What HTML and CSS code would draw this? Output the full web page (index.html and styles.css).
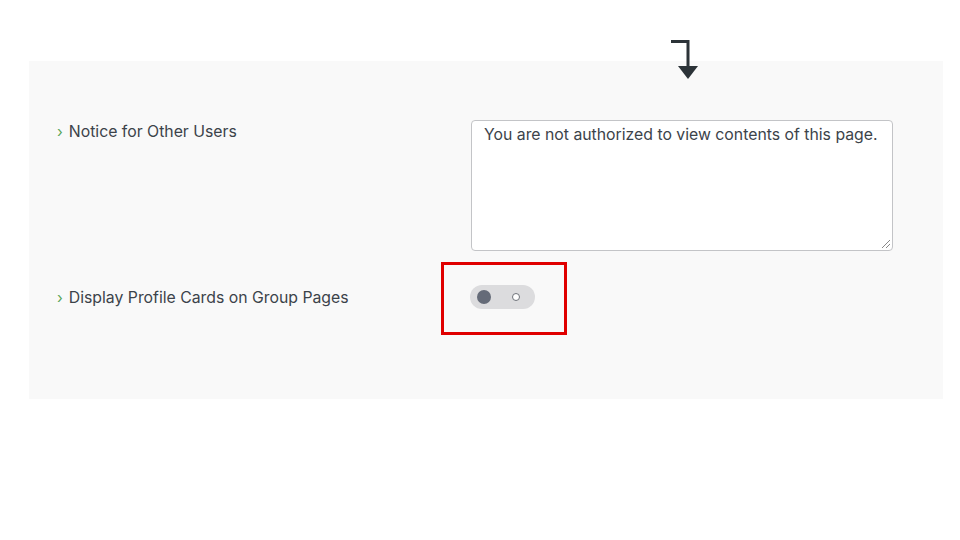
FILE: index.html
```html
<!DOCTYPE html>
<html>
<head>
<meta charset="utf-8">
<link rel="stylesheet" href="styles.css">
</head>
<body>
<div class="top">
  <svg class="turn-arrow" width="30" height="42" viewBox="0 0 30 42">
    <path d="M1 2.5 H18 V29" fill="none" stroke="#2c3338" stroke-width="3"/>
    <path d="M8 27 H28 L18 40 Z" fill="#2c3338"/>
  </svg>
</div>
<div class="panel">
  <div class="row">
    <div class="label"><span class="chev">›</span>Notice for Other Users</div>
    <div class="field">
      <div class="textarea">You are not authorized to view contents of this page.<span class="grip"></span></div>
    </div>
  </div>
  <div class="row row-toggle">
    <div class="label"><span class="chev">›</span>Display Profile Cards on Group Pages</div>
    <div class="field">
      <div class="toggle"><span class="knob"></span><span class="ring"></span></div>
    </div>
    <div class="highlight"></div>
  </div>
</div>
</body>
</html>
```
FILE: styles.css
```css
html, body {
  margin: 0;
  padding: 0;
  background: #fff;
  font-family: Inter, "Noto Sans", "Liberation Sans", sans-serif;
}
.top {
  height: 61px;
  padding-left: 670px;
  box-sizing: border-box;
  padding-top: 39px;
}
.turn-arrow {
  display: block;
}
.panel {
  margin-left: 29px;
  width: 914px;
  height: 338px;
  background: #f9f9f9;
  box-sizing: border-box;
  padding: 59px 50px 0 28px;
}
.row {
  display: flex;
  align-items: flex-start;
}
.label {
  width: 415px;
  padding-top: 1px;
  font-size: 15.8px;
  line-height: 22px;
  color: #3c434a;
  display: flex;
  align-items: center;
}
.chev {
  color: #5aa65a;
  font-size: 15px;
  margin-right: 6px;
  font-weight: 400;
}
.field {
  flex: 1;
}
.textarea {
  position: relative;
  width: 422px;
  height: 131px;
  box-sizing: border-box;
  background: #fff;
  border: 1px solid #c3c4c7;
  border-radius: 4px;
  padding: 3px 12px;
  font-size: 15.8px;
  line-height: 22px;
  color: #3c434a;
}
.grip {
  position: absolute;
  right: 2px;
  bottom: 2px;
  width: 8px;
  height: 8px;
  background: linear-gradient(135deg, transparent 45%, #888 45%, #888 52%, transparent 52%, transparent 70%, #888 70%, #888 78%, transparent 78%);
}
.row-toggle {
  position: relative;
  margin-top: 34px;
  align-items: center;
}
.toggle {
  position: relative;
  margin-left: -2px;
  width: 65px;
  height: 24px;
  border-radius: 12px;
  background: #dcdcde;
}
.knob {
  position: absolute;
  left: 7px;
  top: 5px;
  width: 14px;
  height: 14px;
  border-radius: 50%;
  background: #656b78;
}
.ring {
  position: absolute;
  left: 42px;
  top: 7.5px;
  width: 6px;
  height: 6px;
  border-radius: 50%;
  border: 1.5px solid #6f737a;
  background: #fff;
}
.highlight {
  position: absolute;
  left: 384px;
  top: -23px;
  width: 126px;
  height: 73px;
  box-sizing: border-box;
  border: 3px solid #e00000;
}
```
